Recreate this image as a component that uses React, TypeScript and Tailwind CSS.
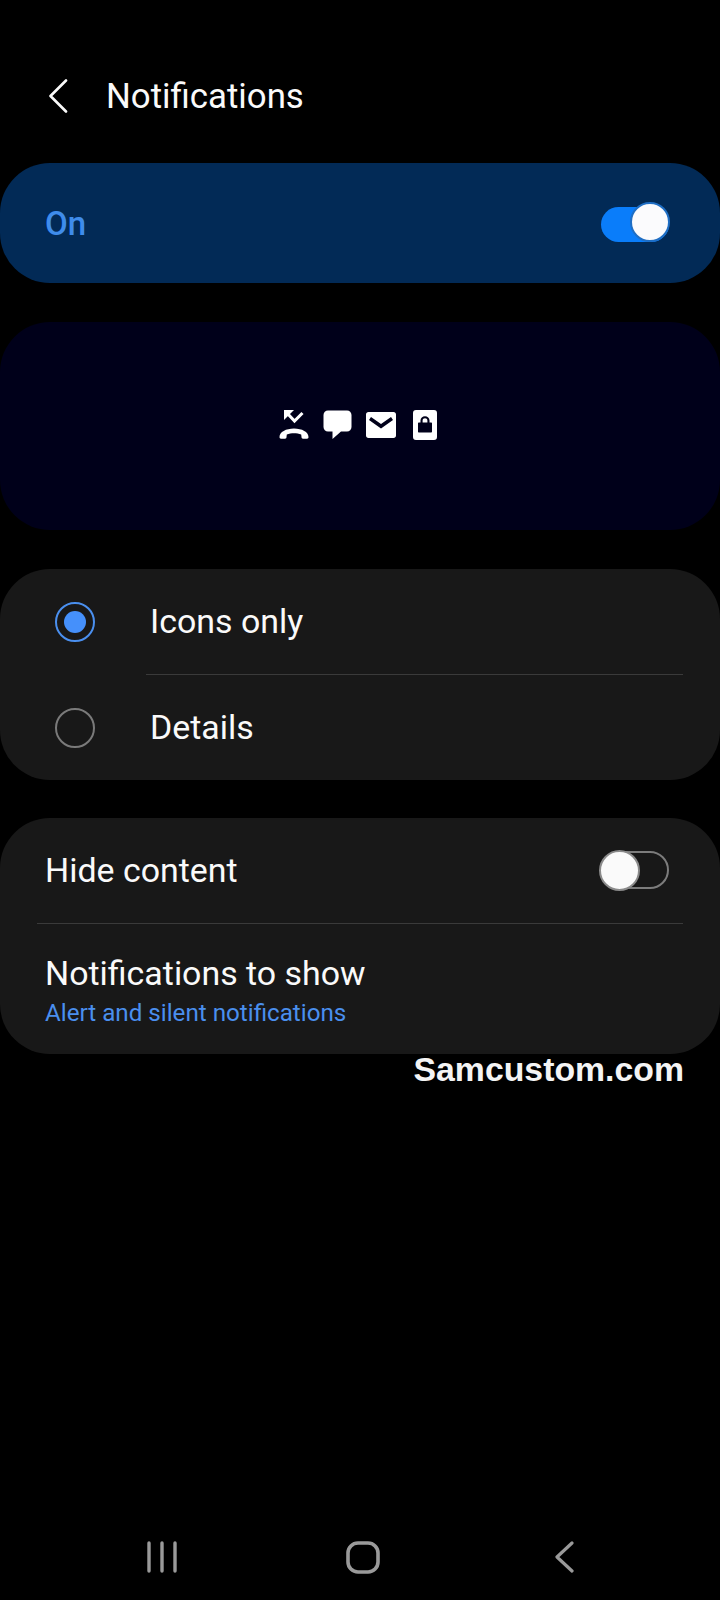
import React from 'react';

const Toggle: React.FC<{ on?: boolean }> = ({ on }) => (
  <div className="relative w-[68px] h-[38px]">
    {on ? (
      <>
        <div className="absolute left-0 top-[4px] w-[68px] h-[35px] rounded-full bg-[#0a7dfa]" />
        <div className="absolute right-[-1px] top-[-1px] w-[40px] h-[40px] rounded-full bg-[#fbfbfd] border-2 border-[#1f6ec4]" />
      </>
    ) : (
      <>
        <div className="absolute left-0 top-0 w-[68px] h-[38px] rounded-full border-2 border-[#7c7c7c]" />
        <div className="absolute left-[-2px] top-[-1px] w-[41px] h-[41px] rounded-full bg-[#fafafa] border-2 border-[#8a8a8a]" />
      </>
    )}
  </div>
);

const Radio: React.FC<{ checked?: boolean }> = ({ checked }) => (
  <div
    className={`w-[40px] h-[40px] rounded-full border-2 flex items-center justify-center ${
      checked ? 'border-[#4a8fee]' : 'border-[#7a7a7a]'
    }`}
  >
    {checked && <div className="w-[22px] h-[22px] rounded-full bg-[#4590fb]" />}
  </div>
);

export default function App() {
  return (
    <div className="w-[720px] h-[1600px] bg-black text-[#fafafa] flex flex-col font-['Roboto',sans-serif]">
      {/* Header */}
      <div className="h-[163px] pt-[79px] pl-[48px] flex items-start gap-[38px]">
        <svg width="20" height="34" viewBox="0 0 20 34" fill="none" stroke="#fafafa" strokeWidth="2.6" strokeLinecap="round" strokeLinejoin="round">
          <path d="M18 1.5 L2.5 17 L18 32.5" />
        </svg>
        <span className="text-[34.8px] leading-[35px]">Notifications</span>
      </div>

      {/* Master switch */}
      <div className="h-[120px] rounded-[50px] bg-[#022a56] pl-[45px] pr-[51px] flex items-center justify-between">
        <span className="text-[33px] font-medium text-[#3f8ceb] mt-[2px]">On</span>
        <div className="mb-[3px]">
          <Toggle on />
        </div>
      </div>

      {/* Preview */}
      <div className="mt-[39px] h-[208px] rounded-[50px] bg-[#00001a] flex items-center justify-center pr-[4px] pb-[2px]">
        <svg width="30" height="30" viewBox="0 0 30 30" fill="#fff" className="mr-[14px]">
          <path d="M0.5 27 C0.5 22 7 18.5 15 18.5 C23 18.5 29.5 22 29.5 27 C29.5 28 29 28.7 28 28.7 L24 28.7 C23 28.7 22.5 28 22.5 27 L22.2 24.5 C20 23.6 17.5 23.2 15 23.2 C12.5 23.2 10 23.6 7.8 24.5 L7.5 27 C7.5 28 7 28.7 6 28.7 L2 28.7 C1 28.7 0.5 28 0.5 27 Z" />
          <path d="M5 0 L5 10 L15 0 Z" />
          <path d="M8 3 L15.5 11 L23.5 3" fill="none" stroke="#fff" strokeWidth="3" />
        </svg>
        <svg width="29" height="30" viewBox="0 0 29 30" fill="#fff" className="mr-[14px]">
          <path d="M5 0.5 H24 C26.5 0.5 28.5 2.5 28.5 5 V17 C28.5 19.5 26.5 21.5 24 21.5 H18 L9.5 29 V21.5 H5 C2.5 21.5 0.5 19.5 0.5 17 V5 C0.5 2.5 2.5 0.5 5 0.5 Z" />
        </svg>
        <svg width="30" height="26" viewBox="0 0 30 26" fill="#fff" className="mr-[17px]">
          <path fillRule="evenodd" d="M2.5 0 H27.5 C29 0 30 1 30 2.5 V23.5 C30 25 29 26 27.5 26 H2.5 C1 26 0 25 0 23.5 V2.5 C0 1 1 0 2.5 0 Z M5 5 L3 8 L15 16.5 L27 8 L25 5 L15 12 Z" />
        </svg>
        <svg width="24" height="30" viewBox="0 0 24 30" fill="#fff">
          <path fillRule="evenodd" d="M3 0 H21 C23 0 24 1 24 3 V27 C24 29 23 30 21 30 H3 C1 30 0 29 0 27 V3 C0 1 1 0 3 0 Z M7.5 12.5 V10.5 C7.5 8 9.5 6.3 12 6.3 C14.5 6.3 16.5 8 16.5 10.5 V12.5 H18 C18.6 12.5 19 12.9 19 13.5 V21.5 C19 22.1 18.6 22.5 18 22.5 H6 C5.4 22.5 5 22.1 5 21.5 V13.5 C5 12.9 5.4 12.5 6 12.5 Z M9.6 12.5 H14.4 V10.5 C14.4 9.2 13.3 8.3 12 8.3 C10.7 8.3 9.6 9.2 9.6 10.5 Z" />
        </svg>
      </div>

      {/* Style options */}
      <div className="mt-[39px] h-[211px] rounded-[50px] bg-[#181818]">
        <div className="h-[105px] pl-[55px] flex items-center gap-[55px]">
          <Radio checked />
          <span className="text-[33.9px] leading-none pt-[1px]">Icons only</span>
        </div>
        <div className="ml-[146px] mr-[37px] h-px bg-[#3a3a3a]" />
        <div className="h-[105px] pl-[55px] flex items-center gap-[55px]">
          <Radio />
          <span className="text-[33.9px] leading-none pt-[1px]">Details</span>
        </div>
      </div>

      {/* Lock screen settings */}
      <div className="mt-[38px] h-[236px] rounded-[50px] bg-[#181818]">
        <div className="h-[105px] pl-[45px] pr-[51px] flex items-center justify-between">
          <span className="text-[33.9px] leading-none pt-[1px]">Hide content</span>
          <div className="mb-[2px]">
            <Toggle />
          </div>
        </div>
        <div className="mx-[37px] h-px bg-[#3a3a3a]" />
        <div className="pl-[45px] pt-[32px]">
          <div className="text-[33.9px] leading-[36px]">Notifications to show</div>
          <div className="text-[24.2px] leading-[28px] mt-[7px] text-[#4a8fee]">Alert and silent notifications</div>
        </div>
      </div>

      <div className="pr-[36px] text-right text-[33.8px] leading-[36px] mt-[-3px] font-bold font-['Liberation_Sans',sans-serif] text-[#f4f4f4]">
        Samcustom.com
      </div>

      {/* Nav bar */}
      <div className="mt-auto mb-[27px] h-[32px] flex items-center pl-[147px] pr-[146px] justify-between">
        <svg width="30" height="32" viewBox="0 0 30 32" fill="none" stroke="#9a9a9a" strokeWidth="3.4" strokeLinecap="round">
          <path d="M2 2 V30 M15 2 V30 M28 2 V30" />
        </svg>
        <svg width="34" height="33" viewBox="0 0 34 33" fill="none" stroke="#9a9a9a" strokeWidth="3.6" className="mr-[6px]">
          <rect x="2" y="2" width="30" height="29" rx="10" />
        </svg>
        <svg width="20" height="32" viewBox="0 0 20 32" fill="none" stroke="#9a9a9a" strokeWidth="3.2" strokeLinecap="round" strokeLinejoin="round">
          <path d="M18 2 L3 16 L18 30" />
        </svg>
      </div>
    </div>
  );
}
